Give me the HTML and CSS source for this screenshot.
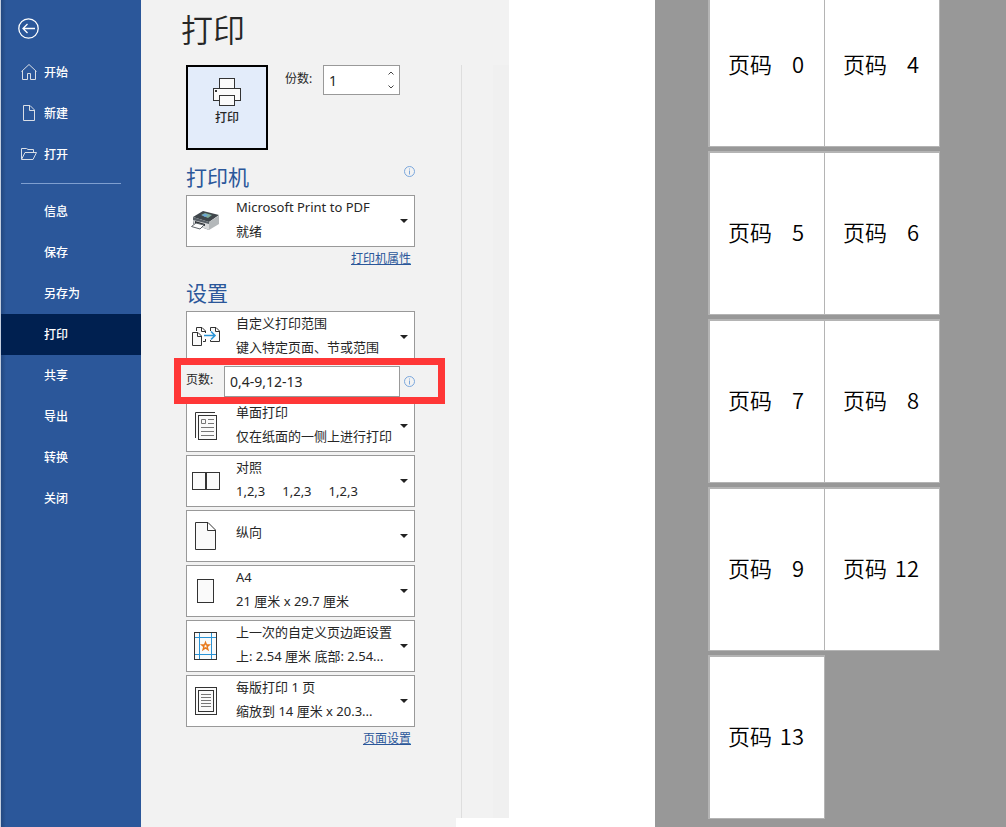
FILE: index.html
```html
<!DOCTYPE html>
<html lang="zh-CN">
  <head>
    <meta charset="UTF-8" />
    <meta name="viewport" content="width=device-width, initial-scale=1.0" />
    <title>打印</title>
    <link rel="stylesheet" href="styles.css" />
  </head>
  <body>
    <div class="app">
      <nav class="sidebar">
        <button class="back" aria-label="返回">
          <svg width="21" height="21" viewBox="0 0 21 21">
            <circle cx="10.5" cy="10.5" r="9.7" />
            <path d="M17 10.5H5.5M9.5 6L5 10.5L9.5 15" />
          </svg>
        </button>
        <a href="#" class="nav-item">
          <svg width="16" height="16" viewBox="0 0 16 16">
            <path d="M0.5 7.5L8 0.5L15.5 7.5M1.5 7V15.5H6.5V9.5H9.5V15.5H14.5V7" />
          </svg>
          开始
        </a>
        <a href="#" class="nav-item">
          <svg width="16" height="16" viewBox="0 0 16 16">
            <path d="M2.5 0.5H9L13.5 5V15.5H2.5ZM8.5 0.5V5.5H13.5" />
          </svg>
          新建
        </a>
        <a href="#" class="nav-item">
          <svg width="16" height="16" viewBox="0 0 16 16">
            <path d="M0.5 13V2.5H5.5L7 3.5H12.5V6M0.5 13.5L4 6.5H15.5L12 13.5Z" />
          </svg>
          打开
        </a>
        <hr />
        <a href="#" class="nav-item text-only">信息</a>
        <a href="#" class="nav-item text-only">保存</a>
        <a href="#" class="nav-item text-only">另存为</a>
        <a href="#" class="nav-item text-only active">打印</a>
        <a href="#" class="nav-item text-only">共享</a>
        <a href="#" class="nav-item text-only">导出</a>
        <a href="#" class="nav-item text-only">转换</a>
        <a href="#" class="nav-item text-only">关闭</a>
      </nav>

      <main class="panel">
        <h1>打印</h1>

        <div class="options">
          <div class="print-row">
            <button class="print-btn">
              <svg width="28" height="28" viewBox="0 0 28 28">
                <rect x="6.5" y="0.5" width="15" height="10" />
                <rect x="0.5" y="10.5" width="27" height="12" />
                <rect x="6.5" y="17.5" width="15" height="10" />
                <rect class="dot" x="2" y="12" width="2" height="2" />
              </svg>
              打印
            </button>
            <label for="copies">份数:</label>
            <div class="spinner">
              <input type="text" id="copies" value="1" />
              <div class="spinner-btns">
                <button aria-label="增加">
                  <svg width="6" height="4" viewBox="0 0 6 4"><path d="M0.5 3.5L3 1L5.5 3.5" /></svg>
                </button>
                <button aria-label="减少">
                  <svg width="6" height="4" viewBox="0 0 6 4"><path d="M0.5 0.5L3 3L5.5 0.5" /></svg>
                </button>
              </div>
            </div>
          </div>

          <div class="section-head">
            <h2>打印机</h2>
            <svg class="info" width="11" height="11" viewBox="0 0 11 11">
              <circle cx="5.5" cy="5.5" r="5" />
              <path d="M5.5 2.5V3.5M5.5 4.5V8.5" />
            </svg>
          </div>
          <button class="dropdown" aria-haspopup="listbox">
            <svg class="icon printer" width="30" height="30" viewBox="0 0 30 30">
              <path fill="#3f464b" d="M2 11L12 5L28 9L18 16Z" />
              <path fill="#596168" d="M2 11L18 16V24L2 18Z" />
              <path fill="#b4b8ba" d="M18 16L28 9.5V18L18 24Z" />
              <path fill="#d8dadb" d="M2 14L18 18V24L13 22L3 20Z" />
              <path fill="#7fae9c" d="M10 9L14 7L21 9L17 12Z" />
              <path fill="#6aa5dc" d="M11 9L14 8L17 9L14 11Z" />
              <path fill="#2b2f33" d="M4 15L14 18V20L4 17Z" />
              <path fill="#fdfdfd" stroke="#5b6166" d="M5 17L13 19L9 23L0.5 20.5Z" />
            </svg>
            <span class="text"><span>Microsoft Print to PDF</span><span>就绪</span></span>
            <span class="arrow"></span>
          </button>
          <div class="link-row"><a href="#">打印机属性</a></div>

          <div class="section-head">
            <h2>设置</h2>
          </div>
          <div class="settings">
            <button class="dropdown" aria-haspopup="listbox">
              <svg class="icon" width="30" height="30" viewBox="0 0 30 30">
                <path d="M5.5 9V5.5H11L14.5 9V11M10.5 5.5V9.5H14.5M14.5 17V19.5H12" />
                <path d="M19.5 9V5.5H25L28.5 9V19.5H19.5V18M24.5 5.5V9.5H28.5" />
                <path d="M1.5 10.5H7L10.5 14V23.5H1.5ZM6.5 10.5V14.5H10.5" />
                <path class="blue wide" d="M13 13.5H24M20 9.5L24 13.5L20 17.5" />
              </svg>
              <span class="text"><span>自定义打印范围</span><span>键入特定页面、节或范围</span></span>
              <span class="arrow"></span>
            </button>

            <div class="pages-row">
              <label for="pages">页数:</label>
              <input type="text" id="pages" value="0,4-9,12-13" />
              <svg class="info" width="11" height="11" viewBox="0 0 11 11">
                <circle cx="5.5" cy="5.5" r="5" />
                <path d="M5.5 2.5V3.5M5.5 4.5V8.5" />
              </svg>
            </div>

            <button class="dropdown" aria-haspopup="listbox">
              <svg class="icon" width="30" height="30" viewBox="0 0 30 30">
                <path d="M24 1.5H4.5V27" />
                <rect x="7.5" y="4.5" width="18" height="24" />
                <path class="thin" d="M10.5 8.5H14.5V12.5H10.5ZM17 8.5H23M17 12.5H23M10 16.5H23M10 20.5H23M10 24.5H23" />
              </svg>
              <span class="text"><span>单面打印</span><span>仅在纸面的一侧上进行打印</span></span>
              <span class="arrow"></span>
            </button>

            <button class="dropdown" aria-haspopup="listbox">
              <svg class="icon" width="30" height="30" viewBox="0 0 30 30">
                <rect x="1.5" y="6.5" width="13" height="17" />
                <rect x="15.5" y="6.5" width="13" height="17" />
              </svg>
              <span class="text"><span>对照</span><span class="sets"><span>1,2,3</span><span>1,2,3</span><span>1,2,3</span></span></span>
              <span class="arrow"></span>
            </button>

            <button class="dropdown" aria-haspopup="listbox">
              <svg class="icon" width="30" height="30" viewBox="0 0 30 30">
                <path d="M4.5 1.5H17L24.5 9V28.5H4.5ZM16.5 1.5V9.5H24.5" />
              </svg>
              <span class="text single"><span>纵向</span></span>
              <span class="arrow"></span>
            </button>

            <button class="dropdown" aria-haspopup="listbox">
              <svg class="icon" width="30" height="30" viewBox="0 0 30 30">
                <rect x="6.5" y="3.5" width="16" height="23" />
              </svg>
              <span class="text"><span>A4</span><span>21 厘米 x 29.7 厘米</span></span>
              <span class="arrow"></span>
            </button>

            <button class="dropdown" aria-haspopup="listbox">
              <svg class="icon" width="30" height="30" viewBox="0 0 30 30">
                <rect x="3.5" y="1.5" width="22" height="27" />
                <path class="blue" d="M8.5 2V28M20.5 2V28M4 6.5H25M4 23.5H25" />
                <path class="star" d="M14.5 11.5L15.5 14H18.2L16.1 15.8L16.9 18.5L14.5 16.9L12.1 18.5L12.9 15.8L10.8 14H13.5Z" />
              </svg>
              <span class="text"><span>上一次的自定义页边距设置</span><span>上: 2.54 厘米 底部: 2.54...</span></span>
              <span class="arrow"></span>
            </button>

            <button class="dropdown" aria-haspopup="listbox">
              <svg class="icon" width="30" height="30" viewBox="0 0 30 30">
                <rect x="4.5" y="1.5" width="21" height="27" />
                <rect x="7.5" y="4.5" width="15" height="21" />
                <path class="thin" d="M10 8.5H20M10 11.5H20M10 14.5H20M10 17.5H20M10 20.5H20" />
              </svg>
              <span class="text"><span>每版打印 1 页</span><span>缩放到 14 厘米 x 20.3...</span></span>
              <span class="arrow"></span>
            </button>
          </div>
          <div class="link-row"><a href="#">页面设置</a></div>
        </div>
      </main>

      <div class="gutter">
        <div class="track"></div>
      </div>

      <section class="preview">
        <div class="sheet-row">
          <div class="sheet"><span>页码</span><span>0</span></div>
          <div class="sheet"><span>页码</span><span>4</span></div>
        </div>
        <div class="sheet-row">
          <div class="sheet"><span>页码</span><span>5</span></div>
          <div class="sheet"><span>页码</span><span>6</span></div>
        </div>
        <div class="sheet-row">
          <div class="sheet"><span>页码</span><span>7</span></div>
          <div class="sheet"><span>页码</span><span>8</span></div>
        </div>
        <div class="sheet-row">
          <div class="sheet"><span>页码</span><span>9</span></div>
          <div class="sheet"><span>页码</span><span>12</span></div>
        </div>
        <div class="sheet-row">
          <div class="sheet"><span>页码</span><span>13</span></div>
        </div>
      </section>
    </div>
  </body>
</html>
```
FILE: styles.css
```css
* {
  box-sizing: border-box;
}
body {
  margin: 0;
  background: #fff;
  color: #262626;
  font-family: "Noto Sans", "Noto Sans CJK SC", sans-serif;
  font-size: 13px;
}
button,
input {
  font: inherit;
  color: inherit;
}
svg {
  display: block;
  flex: none;
  fill: none;
}
.app {
  display: flex;
  min-height: 100vh;
}

/* left menu */
.sidebar {
  flex: none;
  width: 141px;
  border-left: 1px solid #c3cee0;
  background: linear-gradient(to right, #234880, #2b579a 5px);
  font-size: 12px;
}
.back {
  display: block;
  margin: 0;
  padding: 18px 17px 13px;
  border: none;
  background: none;
  cursor: pointer;
}
.back svg {
  stroke: #fff;
  stroke-width: 1.3;
}
.nav-item {
  display: flex;
  align-items: center;
  gap: 7px;
  height: 41px;
  padding: 0 0 2px 20px;
  color: #fff;
  font-weight: 500;
  text-decoration: none;
}
.nav-item svg {
  stroke: #d9dee6;
}
.nav-item.text-only {
  padding-left: 43px;
}
.nav-item.active {
  background: #002050;
}
.sidebar hr {
  height: 1px;
  margin: 8px 20px 7px;
  border: none;
  background: #7f9fd0;
}

/* print options */
.panel {
  flex: none;
  width: 315px;
  padding-left: 40px;
  background: #f2f2f2;
}
h1 {
  margin: 0 0 5px;
  font-size: 32px;
  font-weight: 350;
  line-height: 60px;
}
.options {
  width: 234px;
  padding-left: 5px;
}
.print-row {
  display: flex;
  align-items: flex-start;
  margin-bottom: 11px;
}
.print-row label {
  flex: 1;
  padding-left: 17px;
  font-size: 12px;
  line-height: 28px;
}
.print-btn {
  display: flex;
  flex-direction: column;
  align-items: center;
  width: 82px;
  height: 85px;
  padding: 11px 0 0;
  border: 2px solid #000;
  background: #e3ecfa;
  font-size: 12px;
  font-weight: 500;
  line-height: 24px;
  cursor: pointer;
}
.print-btn svg {
  stroke: #333;
  fill: #fafafa;
}
.print-btn .dot {
  stroke: none;
  fill: #333;
}
.spinner {
  display: flex;
  width: 77px;
  height: 30px;
  margin-right: 15px;
  border: 1px solid #999;
  background: #fff;
}
.spinner input {
  flex: 1;
  min-width: 0;
  padding: 0 5px;
  border: none;
  background: none;
  font-size: 14px;
}
.spinner-btns {
  display: flex;
  flex-direction: column;
  width: 16px;
}
.spinner-btns button {
  display: flex;
  flex: 1;
  align-items: center;
  justify-content: center;
  padding: 0;
  border: none;
  background: none;
}
.spinner-btns svg {
  stroke: #444;
}
.section-head {
  display: flex;
  align-items: flex-start;
  justify-content: space-between;
}
h2 {
  margin: 0;
  padding-bottom: 2px;
  color: #2b579a;
  font-size: 21px;
  font-weight: 400;
  line-height: 32px;
}
.info {
  stroke: #7ba7dc;
}
.section-head .info {
  margin-top: 5px;
}
.dropdown {
  display: flex;
  align-items: center;
  width: 100%;
  height: 52px;
  padding: 0 6px 0 4px;
  border: 1px solid #999;
  background: #fff;
  text-align: left;
  cursor: pointer;
}
.dropdown .icon {
  margin-right: 15px;
  fill: #fafafa;
  stroke: #333;
}
.dropdown .printer {
  stroke: none;
}
.icon .blue {
  fill: none;
  stroke: #2a93d5;
}
.icon .wide {
  stroke-width: 1.6;
}
.icon .thin {
  fill: none;
  stroke: #777;
}
.icon .star {
  fill: none;
  stroke: #e8791d;
  stroke-width: 1.4;
}
.dropdown .text {
  display: flex;
  flex: 1;
  flex-direction: column;
  height: 52px;
  line-height: 24px;
  white-space: nowrap;
}
.dropdown .single {
  padding-top: 10px;
}
.sets {
  display: flex;
  gap: 17px;
}
.arrow {
  border: 4px solid transparent;
  border-top-color: #222;
  border-bottom: none;
}
.link-row {
  padding-right: 4px;
  font-size: 12px;
  line-height: 24px;
  text-align: right;
}
.link-row a {
  color: #2b579a;
}
.link-row + .section-head {
  margin-top: 6px;
}
.settings {
  display: flex;
  flex-direction: column;
  gap: 3px;
}
.pages-row {
  position: relative;
  display: flex;
  align-items: center;
  justify-content: space-between;
  height: 31px;
}
.pages-row label {
  width: 38px;
  font-size: 12px;
  line-height: 28px;
  align-self: flex-start;
}
.pages-row input {
  width: 176px;
  height: 31px;
  margin-right: 4px;
  padding: 0 5px;
  border: 1px solid #999;
  background: #fff;
  font-size: 14px;
}
/* red marker around the page range */
.pages-row::before {
  content: "";
  position: absolute;
  inset: -8px -30px -7px -12px;
  border: 7px solid #ff3737;
  pointer-events: none;
}

/* strip between options and preview */
.gutter {
  display: flex;
  flex: none;
  justify-content: flex-end;
  width: 53px;
  margin: 0 146px 9px 0;
  padding-top: 65px;
  background: #f2f2f2;
}
.track {
  width: 48px;
  border-left: 1px solid #dedede;
  background: linear-gradient(to right, #f2f2f2 31px, #f0f0f0 31px);
}

/* page preview */
.preview {
  flex: 1;
  display: flex;
  flex-direction: column;
  gap: 4px;
  height: 100vh;
  padding-left: 53px;
  overflow: hidden;
  background: #989898;
}
.sheet-row {
  display: flex;
  flex: none;
  align-self: flex-start;
  height: 164px;
  border: solid #b4b4b4;
  border-width: 2px 0 1px 2px;
}
.sheet-row:first-child {
  margin-top: -17px;
}
.sheet {
  display: flex;
  align-items: center;
  justify-content: space-between;
  width: 115px;
  padding: 0 20px 6px 18px;
  border-right: 1px solid #b4b4b4;
  background: #fff;
  color: #000;
  font-family: "Noto Sans CJK SC", sans-serif;
  font-size: 22px;
  font-weight: 350;
}
```
